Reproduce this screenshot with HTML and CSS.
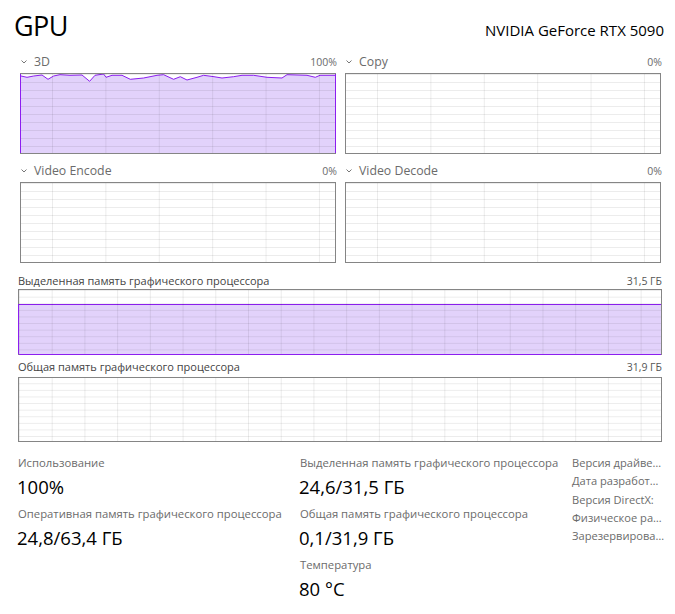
FILE: index.html
```html
<!DOCTYPE html>
<html lang="ru">
<head>
<meta charset="utf-8">
<title>GPU</title>
<link rel="stylesheet" href="styles.css">
</head>
<body>
<div class="page">
  <header class="header">
    <h1 class="title">GPU</h1>
    <div class="device">NVIDIA GeForce RTX 5090</div>
  </header>

  <section class="engines">
    <div class="engine">
      <div class="engine-head">
        <span class="engine-name"><svg class="chev" width="6" height="4" viewBox="0 0 6 4"><path d="M0.5 0.5 L3 3 L5.5 0.5" fill="none" stroke="#777" stroke-width="1"/></svg>3D</span>
        <span class="engine-val">100%</span>
      </div>
      <div class="chart chart-small">
        <svg class="graph" width="314" height="79" viewBox="0 0 314 79" preserveAspectRatio="none">
          <polygon fill="#e2d2fb" points="0,2 6,3.3 12.7,2 21,1 27,5.3 32.6,2 39,0.7 49,1.3 61,1 68.6,7.3 74,1.3 82.6,0 85,3.3 91,1.3 101,1.3 109.3,5.3 122.6,4 136,1.3 142.6,0.7 152.6,5.3 159.3,2.7 166,6 176,3.3 182.6,1.3 193,2.7 201,4 212.6,2.7 221,1.3 232.6,1.3 246,3.3 261,4 266,0.7 286,1.3 294.3,3.3 299,1.3 314,1.3 314,79 0,79"/>
          <polyline fill="none" stroke="#8c1ef0" stroke-width="1" points="0,2 6,3.3 12.7,2 21,1 27,5.3 32.6,2 39,0.7 49,1.3 61,1 68.6,7.3 74,1.3 82.6,0 85,3.3 91,1.3 101,1.3 109.3,5.3 122.6,4 136,1.3 142.6,0.7 152.6,5.3 159.3,2.7 166,6 176,3.3 182.6,1.3 193,2.7 201,4 212.6,2.7 221,1.3 232.6,1.3 246,3.3 261,4 266,0.7 286,1.3 294.3,3.3 299,1.3 314,1.3"/>
        </svg>
      </div>
    </div>
    <div class="engine">
      <div class="engine-head">
        <span class="engine-name"><svg class="chev" width="6" height="4" viewBox="0 0 6 4"><path d="M0.5 0.5 L3 3 L5.5 0.5" fill="none" stroke="#777" stroke-width="1"/></svg>Copy</span>
        <span class="engine-val">0%</span>
      </div>
      <div class="chart chart-small"></div>
    </div>
    <div class="engine">
      <div class="engine-head">
        <span class="engine-name"><svg class="chev" width="6" height="4" viewBox="0 0 6 4"><path d="M0.5 0.5 L3 3 L5.5 0.5" fill="none" stroke="#777" stroke-width="1"/></svg>Video Encode</span>
        <span class="engine-val">0%</span>
      </div>
      <div class="chart chart-small"></div>
    </div>
    <div class="engine">
      <div class="engine-head">
        <span class="engine-name"><svg class="chev" width="6" height="4" viewBox="0 0 6 4"><path d="M0.5 0.5 L3 3 L5.5 0.5" fill="none" stroke="#777" stroke-width="1"/></svg>Video Decode</span>
        <span class="engine-val">0%</span>
      </div>
      <div class="chart chart-small"></div>
    </div>
  </section>

  <section class="memory">
    <div class="mem-head">
      <span>Выделенная память графического процессора</span>
      <span class="mem-total">31,5 ГБ</span>
    </div>
    <div class="chart chart-wide">
      <div class="mem-fill" style="height: 78%"></div>
    </div>
    <div class="mem-head mem-head-second">
      <span>Общая память графического процессора</span>
      <span class="mem-total">31,9 ГБ</span>
    </div>
    <div class="chart chart-wide chart-shared"></div>
  </section>

  <section class="stats">
    <div class="stat-col">
      <div class="stat-label">Использование</div>
      <div class="stat-value">100%</div>
      <div class="stat-label">Оперативная память графического процессора</div>
      <div class="stat-value">24,8/63,4 ГБ</div>
    </div>
    <div class="stat-col">
      <div class="stat-label">Выделенная память графического процессора</div>
      <div class="stat-value">24,6/31,5 ГБ</div>
      <div class="stat-label">Общая память графического процессора</div>
      <div class="stat-value">0,1/31,9 ГБ</div>
      <div class="stat-label">Температура</div>
      <div class="stat-value">80 °C</div>
    </div>
    <div class="info-col">
      <div class="info-item">Версия драйве…</div>
      <div class="info-item">Дата разработ…</div>
      <div class="info-item">Версия DirectX:</div>
      <div class="info-item">Физическое ра…</div>
      <div class="info-item">Зарезервирова…</div>
    </div>
  </section>
</div>
</body>
</html>
```

FILE: styles.css
```css
html, body {
  margin: 0;
  padding: 0;
  background: #ffffff;
}

body {
  font-family: "Open Sans", "Noto Sans", sans-serif;
  color: #000;
}

.page {
  width: 675px;
  height: 614px;
  box-sizing: border-box;
  padding: 0 13px 0 18px;
  overflow: hidden;
}

.header {
  display: flex;
  justify-content: space-between;
  align-items: baseline;
  padding-top: 6px;
  margin-bottom: 6px;
}

.title {
  margin: 0 0 0 -4px;
  font-size: 27px;
  line-height: 40px;
  font-weight: 400;
  letter-spacing: -0.6px;
  color: #000;
}

.device {
  font-size: 15px;
  margin-right: -2px;
  color: #000;
}

.engines {
  display: grid;
  grid-template-columns: 317px 317px;
  column-gap: 8px;
  row-gap: 7px;
  padding-left: 2px;
}

.engine-head {
  display: flex;
  justify-content: space-between;
  align-items: center;
  height: 18px;
  line-height: 18px;
  padding-top: 1px;
  margin-bottom: 2px;
}

.engine-name {
  display: flex;
  align-items: center;
  font-size: 12.3px;
  color: #6b6b6b;
}

.chev {
  display: block;
  margin: 0 7px 0 1px;
}

.engine-val {
  font-size: 10.5px;
  color: #6b6b6b;
}

.chart {
  position: relative;
  box-sizing: border-box;
  border: 1px solid #858585;
  background: #fff;
}

.chart::after {
  content: "";
  position: absolute;
  inset: 0;
  pointer-events: none;
}

.chart-small {
  width: 316px;
  height: 81px;
}

.chart-small::after {
  background-image:
    linear-gradient(to bottom, rgba(0, 0, 0, 0.075) 0, rgba(0, 0, 0, 0.075) 1px, transparent 1px),
    linear-gradient(to right, rgba(0, 0, 0, 0.075) 0, rgba(0, 0, 0, 0.075) 1px, transparent 1px);
  background-size: 100% 8px, 53.4px 100%;
  background-position: 0 0, 31px 0;
}

.graph {
  display: block;
  box-shadow: -1px 0 0 #8c1ef0, 1px 0 0 #8c1ef0;
}

.memory {
  margin-top: 11px;
}

.mem-head {
  display: flex;
  justify-content: space-between;
  height: 14px;
  line-height: 14px;
  font-size: 11px;
  color: #444;
  margin-bottom: 1px;
}

.mem-total {
  font-size: 10.5px;
  color: #555;
}

.mem-head-second {
  margin-top: 5px;
  margin-bottom: 3px;
}

.chart-wide {
  width: 644px;
  height: 66px;
  display: flex;
  flex-direction: column;
  justify-content: flex-end;
}

.chart-wide::after {
  background-image:
    linear-gradient(to bottom, rgba(0, 0, 0, 0.075) 0, rgba(0, 0, 0, 0.075) 1px, transparent 1px),
    linear-gradient(to right, rgba(0, 0, 0, 0.075) 0, rgba(0, 0, 0, 0.075) 1px, transparent 1px);
  background-size: 100% 6.6px, 32.72px 100%;
  background-position: 0 6.7px, 32.7px 0;
}

.chart-shared {
  height: 65px;
}

.chart-shared::after {
  background-position: 0 5.3px, 32.7px 0;
}

.mem-fill {
  box-sizing: border-box;
  background: #e2d2fb;
  border-top: 1px solid #8c1ef0;
  box-shadow: -1px 0 0 #8c1ef0, 0 1px 0 #8c1ef0;
}

.stats {
  display: grid;
  grid-template-columns: 282px 272px 90px;
  margin-top: 12px;
}

.stat-col {
  display: flex;
  flex-direction: column;
}

.stat-label {
  height: 18px;
  line-height: 18px;
  font-size: 11.3px;
  color: #6b6b6b;
  white-space: nowrap;
}

.stat-value {
  height: 29px;
  line-height: 29px;
  font-size: 18.5px;
  margin-left: -1px;
  color: #000;
  margin-bottom: 4px;
  white-space: nowrap;
}

.info-col {
  display: flex;
  flex-direction: column;
}

.info-item {
  height: 18.25px;
  line-height: 18px;
  font-size: 11.1px;
  color: #6b6b6b;
  white-space: nowrap;
}
```
